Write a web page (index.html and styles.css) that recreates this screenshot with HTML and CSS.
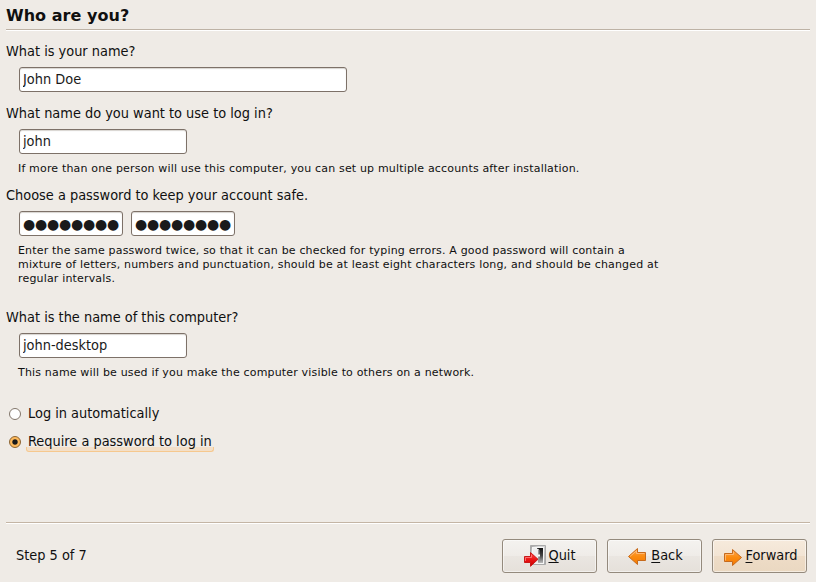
FILE: index.html
```html
<!DOCTYPE html>
<html lang="en">
<head>
<meta charset="utf-8">
<title>Install</title>
<link rel="stylesheet" href="styles.css">
</head>
<body>
<main class="wizard">
  <h1 class="title"><span>Who are you?</span></h1>
  <section class="group name">
    <label class="label" for="name">What is your name?</label>
    <input class="entry wide" id="name" value="John Doe">
  </section>
  <section class="group login">
    <label class="label" for="login">What name do you want to use to log in?</label>
    <input class="entry" id="login" value="john">
    <p class="hint">If more than one person will use this computer, you can set up multiple accounts after installation.</p>
  </section>
  <section class="group password">
    <div class="label">Choose a password to keep your account safe.</div>
    <div class="pair">
      <div class="entry secret">●●●●●●●●</div>
      <div class="entry secret">●●●●●●●●</div>
    </div>
    <p class="hint">Enter the same password twice, so that it can be checked for typing errors. A good password will contain a<br>mixture of letters, numbers and punctuation, should be at least eight characters long, and should be changed at<br>regular intervals.</p>
  </section>
  <section class="group host">
    <label class="label" for="host">What is the name of this computer?</label>
    <input class="entry" id="host" value="john-desktop">
    <p class="hint">This name will be used if you make the computer visible to others on a network.</p>
  </section>
  <section class="choices">
    <div class="choice"><i class="radio"></i><span>Log in automatically</span></div>
    <div class="choice focus"><i class="radio on"></i><span>Require a password to log in</span></div>
  </section>
  <footer class="footer">
    <span class="step">Step 5 of 7</span>
    <button class="button">
      <svg class="icon" width="24" height="24" viewBox="0 0 24 24">
        <defs>
          <linearGradient id="frame" x1="0" y1="0" x2="1" y2="1"><stop offset="0" stop-color="#999"/><stop offset=".3" stop-color="#ddd"/><stop offset="1" stop-color="#aaa"/></linearGradient>
          <linearGradient id="dark" x1="0" y1="0" x2="0" y2="1"><stop offset="0" stop-color="#111"/><stop offset=".5" stop-color="#444"/><stop offset="1" stop-color="#bbb"/></linearGradient>
          <linearGradient id="red" x1="0" y1="0" x2="0" y2="1"><stop offset="0" stop-color="#ff5050"/><stop offset=".5" stop-color="#ed1515"/><stop offset="1" stop-color="#c80000"/></linearGradient>
        </defs>
        <path d="M7.500 1.500h15v19h-15z" fill="url(#frame)" stroke="#aaa"/>
        <path d="M9 3h12v17H9z" fill="#f5f5f5"/>
        <path d="M14 4h6v15h-6z" fill="url(#dark)"/>
        <path d="M10 4l6 1v14l-6 1z" fill="#eee"/>
        <path d="M15 5l1.500 1v12l-1.500 1z" fill="#999"/>
        <path d="M15 10.500h2v2h-2z" fill="#fff"/>
        <path d="M1.500 12.500h6v-4l7.500 6.800-7.500 7V18.500h-6z" fill="url(#red)" stroke="#c81818" stroke-linejoin="round"/>
        <path d="M2.500 17v-3.500h6v-2.700" fill="none" stroke="#ff9090" stroke-width=".7"/>
      </svg><span><u>Q</u>uit</span>
    </button>
    <button class="button">
      <svg class="icon" width="24" height="24" viewBox="0 0 24 24">
        <defs><linearGradient id="orange" x1="0" y1="0" x2="0" y2="1"><stop offset="0" stop-color="#ffa64d"/><stop offset=".5" stop-color="#fb8b10"/><stop offset="1" stop-color="#f57900"/></linearGradient></defs>
        <path d="M2.500 12.500L11.500 4.500v4h8v8h-8v4z" fill="url(#orange)" stroke="#c66a1c" stroke-linejoin="round"/>
        <path d="M4 12.500l6.500-5.700v2.700h8" fill="none" stroke="#ffc184" stroke-width=".8"/>
      </svg><span><u>B</u>ack</span>
    </button>
    <button class="button primary">
      <svg class="icon" width="24" height="24" viewBox="0 0 24 24">
        <path d="M20.500 13.500L11.500 5.500v4h-8v8h8v4z" fill="url(#orange)" stroke="#c66a1c" stroke-linejoin="round"/>
        <path d="M4.500 16.500v-6h8V7.700" fill="none" stroke="#ffc184" stroke-width=".8"/>
      </svg><span><u>F</u>orward</span>
    </button>
  </footer>
</main>
</body>
</html>
```
FILE: styles.css
```css
* { box-sizing: border-box; }
body {
  margin: 0;
  background: #efebe6;
  color: #101010;
  font: 14.4px/16px "DejaVu Sans Condensed", "DejaVu Sans", sans-serif;
  font-stretch: condensed;
}
.wizard {
  display: flex;
  flex-direction: column;
  height: 582px;
  padding: 5px 6px 9px;
}
.title {
  margin: 0;
  height: 26px;
  padding-top: 1px;
  font: bold 16px/20px "DejaVu Sans", sans-serif;
  letter-spacing: .04px;
  border-bottom: 1px solid #fff;
  box-shadow: inset 0 -1px #bdb2a5;
}
.group { display: flex; flex-direction: column; align-items: flex-start; white-space: nowrap; }
.name { margin-top: 12px; }
.login { margin-top: 13px; }
.password { margin-top: 12px; }
.host { margin-top: 24px; }
.label { height: 16px; margin-bottom: 8px; }
.entry {
  width: 168px;
  height: 25px;
  margin: 0 0 0 13px;
  padding: 0 3px 1px;
  border: 1px solid #7d7168;
  border-radius: 3px;
  background: #fff;
  box-shadow: inset 0 1px 1px #d8d4d0;
  color: #1a1a1a;
  font: inherit;
  line-height: 22px;
}
.wide { width: 328px; }
.pair { display: flex; gap: 8px; margin-left: 13px; }
.secret {
  width: 104px;
  margin: 0;
  padding-top: 1px;
  font: 14px/22px "DejaVu Sans", sans-serif;
  letter-spacing: -.2px;
}
.hint { margin: 8px 0 -1px 12px; font: 11px/14px "DejaVu Sans", sans-serif; letter-spacing: .17px; }
.choices { margin: 26px 0 0 3px; display: flex; flex-direction: column; gap: 12px; }
.choice { display: flex; align-items: center; gap: 7px; height: 16px; white-space: nowrap; }
.radio {
  width: 12px;
  height: 12px;
  margin-top: 2px;
  border: 1px solid #82766b;
  border-radius: 50%;
  background: #fff;
}
.on { background: radial-gradient(circle, #1a1a1a 2.200px, #fdb95c 3.200px); border-color: #8c632f; }
.focus span { position: relative; }
.focus span::after {
  content: "";
  position: absolute;
  left: -2px;
  right: -2px;
  bottom: -3px;
  height: 4px;
  border: 1px solid #f6c88e;
  border-top: 0;
  border-radius: 0 0 3px 3px;
  background: #f3dfc8;
  z-index: -1;
}
.footer {
  display: flex;
  align-items: center;
  gap: 10px;
  height: 51px;
  margin-top: auto;
  padding: 16px 3px 0 10px;
  border-top: 1px solid #c4b5a5;
  box-shadow: inset 0 1px #fff;
}
.step { margin: 0 auto 2px 0; }
.button {
  display: flex;
  align-items: center;
  justify-content: center;
  gap: 1px;
  width: 95px;
  height: 34px;
  padding: 0 0 1px;
  border: 1px solid #948a7d;
  border-radius: 3px;
  background: linear-gradient(#f4f2ef, #efece8 50%, #eae6e1 51%, #e5e0da);
  box-shadow: inset 0 0 0 1px #ffffff80;
  color: #101010;
  font: inherit;
}
.button span { margin-bottom: 2px; }
.primary { padding-right: 1px; background: linear-gradient(#f6eadc, #f2e4d4 50%, #eedcc7 51%, #ead8c1); }
u { text-underline-offset: 2px; text-decoration-thickness: 1px; text-decoration-skip-ink: none; }
```
